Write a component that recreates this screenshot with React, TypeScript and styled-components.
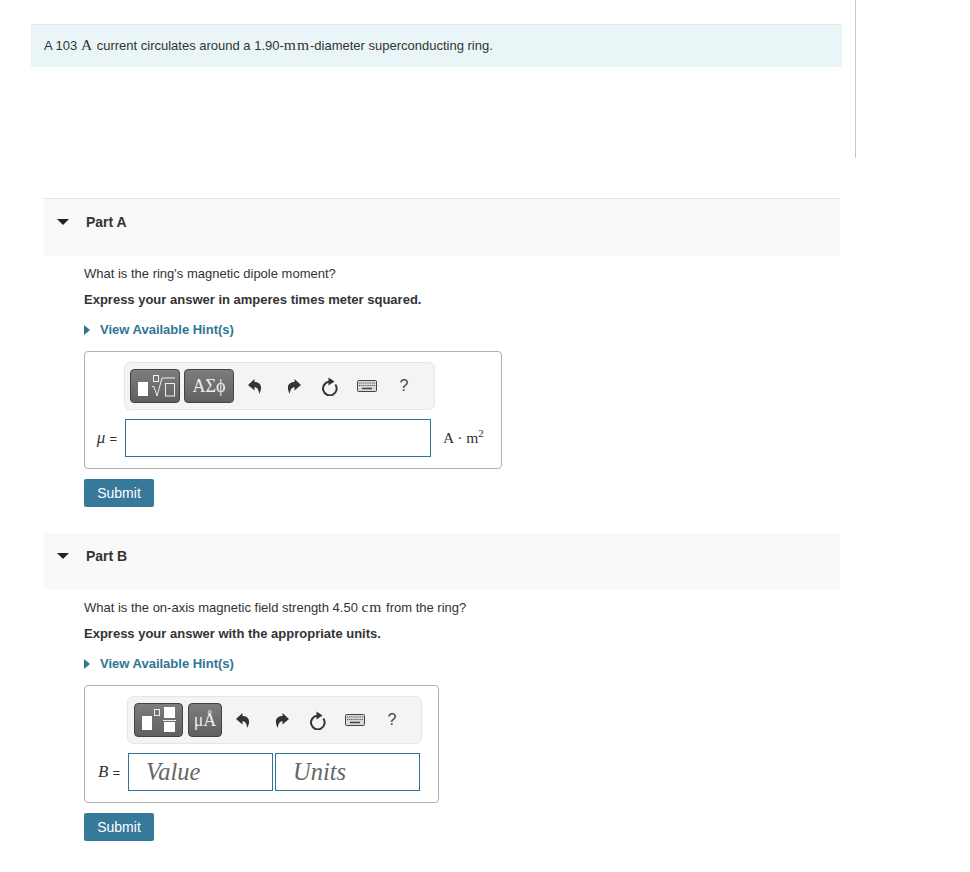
import React from "react";
import styled, { createGlobalStyle } from "styled-components";

const GlobalStyle = createGlobalStyle`
  body {
    margin: 0;
    background: #fff;
    color: #333;
    font-family: "Liberation Sans", Arial, sans-serif;
    font-size: 13px;
  }
`;

const Page = styled.div`
  width: 970px;
  height: 872px;
  overflow: hidden;
`;

const Intro = styled.div`
  box-sizing: border-box;
  width: 856px;
  height: 158px;
  padding: 24px 13px 0 31px;
  border-right: 1px solid #c9c9c9;
`;

const Banner = styled.div`
  box-sizing: border-box;
  height: 43px;
  padding: 12px 13px 0;
  line-height: 18px;
  background: #e9f5f7;
  border-top: 1px solid #e2e6e6;
`;

const Unit = styled.span`
  font-family: "Liberation Serif", serif;
  font-size: 15.5px;
  letter-spacing: 1px;
  line-height: 0;
`;

const PartList = styled.div`
  margin: 40px 0 0 44px;
  width: 796px;
  display: flex;
  flex-direction: column;
  gap: 26px;
`;

const PartHeader = styled.div<{ $first?: boolean }>`
  box-sizing: content-box;
  height: 43px;
  padding: 14px 0 0 13px;
  display: flex;
  align-items: flex-start;
  background: #f9f9f9;
  border-top: ${(props) => (props.$first ? "1px solid #e2e2e2" : "none")};
`;

const Caret = styled.span`
  width: 0;
  height: 0;
  margin: 6px 17px 0 0;
  border-style: solid;
  border-width: 6px 6px 0;
  border-color: #222 transparent transparent;
`;

const PartTitle = styled.span`
  font-size: 14px;
  font-weight: bold;
  line-height: 18px;
  color: #333;
`;

const PartBody = styled.div`
  padding: 9px 0 0 40px;
`;

const Question = styled.div`
  line-height: 18px;
`;

const Instruction = styled.div`
  margin-top: 8px;
  line-height: 18px;
  font-weight: bold;
`;

const HintLink = styled.a`
  margin-top: 12px;
  display: flex;
  align-items: center;
  line-height: 18px;
  font-weight: bold;
  color: #2f7596;

  &::before {
    content: "";
    width: 0;
    height: 0;
    margin-right: 10px;
    border-style: solid;
    border-width: 5px 0 5px 6px;
    border-color: transparent transparent transparent #2f7596;
  }
`;

const AnswerBox = styled.div<{ $width: number }>`
  box-sizing: border-box;
  width: ${(props) => props.$width}px;
  height: 118px;
  margin-top: 12px;
  padding-top: 10px;
  border: 1px solid #b0b0b0;
  border-radius: 4px;
`;

const Toolbar = styled.div<{ $offset: number; $width: number; $inset: number }>`
  box-sizing: border-box;
  width: ${(props) => props.$width}px;
  height: 48px;
  margin-left: ${(props) => props.$offset}px;
  padding: 6px 0 0 ${(props) => props.$inset}px;
  display: flex;
  align-items: flex-start;
  background: #f4f4f4;
  border: 1px solid #e6e6e6;
  border-radius: 6px;
`;

const TemplateButton = styled.div<{ $width: number; $gap: number }>`
  box-sizing: border-box;
  width: ${(props) => props.$width}px;
  height: 34px;
  margin-right: ${(props) => props.$gap}px;
  display: flex;
  align-items: center;
  justify-content: center;
  color: #eee;
  font-family: "Liberation Serif", serif;
  font-size: 18px;
  background: linear-gradient(#7d7d7d, #606060);
  border: 1px solid #444;
  border-radius: 4px;

  svg {
    display: block;
  }
`;

const ToolSlot = styled.div<{ $width: number }>`
  width: ${(props) => props.$width}px;
  height: 34px;
  display: flex;
  align-items: center;
  justify-content: center;
  color: #333;
  font-size: 16px;
`;

const HelpMark = styled.span`
  font-family: "Liberation Sans", sans-serif;
  font-size: 16px;
  color: #444;
`;

const AnswerRow = styled.div`
  margin-top: 9px;
  display: flex;
  align-items: center;
`;

const FieldLabel = styled.div<{ $width: number }>`
  box-sizing: border-box;
  width: ${(props) => props.$width}px;
  padding-right: 8px;
  text-align: right;
  color: #333;
`;

const MathVar = styled.i`
  font-family: "Liberation Serif", serif;
  font-size: 17px;
  margin-right: 4px;
`;

const FieldGroup = styled.div`
  display: flex;
  gap: 2px;
`;

const Field = styled.input<{ $width: number }>`
  box-sizing: border-box;
  width: ${(props) => props.$width}px;
  height: 38px;
  padding: 0 0 0 17px;
  background: #fff;
  border: 1px solid #2f7596;
  border-radius: 0;
  outline: none;
  font-family: "Liberation Serif", serif;
  font-size: 24.5px;
  font-style: italic;

  &::placeholder {
    color: #666;
    opacity: 1;
  }
`;

const UnitLabel = styled.div`
  margin-left: 12px;
  font-family: "Liberation Serif", serif;
  font-size: 15.5px;
  color: #333;

  sup {
    font-size: 11px;
    line-height: 0;
  }
`;

const SubmitButton = styled.button`
  display: block;
  width: 70px;
  height: 28px;
  margin-top: 10px;
  padding: 0;
  background: #37799b;
  color: #fff;
  border: none;
  border-radius: 2px;
  font-family: "Liberation Sans", Arial, sans-serif;
  font-size: 14px;
`;

const RadicalIcon = () => (
  <svg width="48" height="32" viewBox="0 0 48 32">
    <rect x="7" y="12" width="10" height="14" fill="#fff" />
    <g fill="none" stroke="#eee" strokeWidth="1">
      <rect x="22.5" y="5.5" width="5" height="6" />
      <path d="M21 16.5h2l3 9.5 5-18h13" />
      <rect x="34.5" y="13.5" width="9" height="12.5" />
    </g>
  </svg>
);

const FractionIcon = () => (
  <svg width="47" height="32" viewBox="0 0 47 32">
    <rect x="7" y="12" width="10" height="14" fill="#fff" />
    <rect x="19.5" y="5.5" width="5" height="6" fill="none" stroke="#eee" />
    <rect x="29" y="3" width="11" height="11" fill="#fff" />
    <rect x="28" y="16" width="13" height="1" fill="#eee" />
    <rect x="29" y="18" width="11" height="10" fill="#fff" />
  </svg>
);

const ReplyArrow = styled.svg<{ $flip?: boolean }>`
  display: block;
  transform: ${(props) => (props.$flip ? "scaleX(-1)" : "none")};
`;

const ArrowIcon = ({ flip }: { flip?: boolean }) => (
  <ReplyArrow $flip={flip} width="14" height="15" viewBox="0 0 14 15">
    <path
      d="M6.5 0 0 6l6.500 5.500V8.200c2.800 0 4.200 2.200 4.700 6.800 3.300-5.800 2.500-12-4.700-12z"
      fill="#333"
    />
  </ReplyArrow>
);

const ResetIcon = () => (
  <svg width="16" height="20" viewBox="0 0 16 20">
    <path
      d="M13.3 8.500A6.800 6.800 0 1 1 7 5.800"
      fill="none"
      stroke="#333"
      strokeWidth="2"
    />
    <path d="M6.500 1.500l6 4-6 4z" fill="#333" />
  </svg>
);

const KeyboardIcon = () => (
  <svg width="20" height="12" viewBox="0 0 20 12">
    <rect x="0.5" y="0.5" width="19" height="11" rx="1" fill="#d8d8d8" stroke="#444" />
    <path
      d="M2 3h16M2 5.500h16"
      stroke="#555"
      strokeWidth="1.200"
      strokeDasharray="1.200 0.900"
    />
    <path d="M5 8.500h10" stroke="#444" strokeWidth="1.500" />
  </svg>
);

const slotWidths = [40, 38, 34, 40, 34];

interface PartConfig {
  title: string;
  first?: boolean;
  question: React.ReactNode;
  instruction: string;
  boxWidth: number;
  toolbarWidth: number;
  toolbarInset: number;
  labelWidth: number;
  label: React.ReactNode;
}

const parts: PartConfig[] = [
  {
    title: "Part A",
    first: true,
    question: "What is the ring's magnetic dipole moment?",
    instruction: "Express your answer in amperes times meter squared.",
    boxWidth: 418,
    toolbarWidth: 311,
    toolbarInset: 5,
    labelWidth: 40,
    label: "μ",
  },
  {
    title: "Part B",
    question: (
      <>
        What is the on-axis magnetic field strength 4.50 <Unit>cm</Unit> from
        the ring?
      </>
    ),
    instruction: "Express your answer with the appropriate units.",
    boxWidth: 355,
    toolbarWidth: 295,
    toolbarInset: 6,
    labelWidth: 43,
    label: "B",
  },
];

const App: React.FC = () => {
  return (
    <Page>
      <GlobalStyle />
      <Intro>
        <Banner>
          A 103 <Unit>A</Unit> current circulates around a 1.90-<Unit>mm</Unit>
          -diameter superconducting ring.
        </Banner>
      </Intro>
      <PartList>
        {parts.map((part) => (
          <section key={part.title}>
            <PartHeader $first={part.first}>
              <Caret />
              <PartTitle>{part.title}</PartTitle>
            </PartHeader>
            <PartBody>
              <Question>{part.question}</Question>
              <Instruction>{part.instruction}</Instruction>
              <HintLink>View Available Hint(s)</HintLink>
              <AnswerBox $width={part.boxWidth}>
                <Toolbar
                  $offset={part.labelWidth - 1}
                  $width={part.toolbarWidth}
                  $inset={part.toolbarInset}
                >
                  {part.first ? (
                    <>
                      <TemplateButton $width={50} $gap={4}>
                        <RadicalIcon />
                      </TemplateButton>
                      <TemplateButton $width={50} $gap={1}>
                        ΑΣϕ
                      </TemplateButton>
                    </>
                  ) : (
                    <>
                      <TemplateButton $width={49} $gap={5}>
                        <FractionIcon />
                      </TemplateButton>
                      <TemplateButton $width={34} $gap={1}>
                        μÅ
                      </TemplateButton>
                    </>
                  )}
                  <ToolSlot $width={slotWidths[0]}>
                    <ArrowIcon />
                  </ToolSlot>
                  <ToolSlot $width={slotWidths[1]}>
                    <ArrowIcon flip />
                  </ToolSlot>
                  <ToolSlot $width={slotWidths[2]}>
                    <ResetIcon />
                  </ToolSlot>
                  <ToolSlot $width={slotWidths[3]}>
                    <KeyboardIcon />
                  </ToolSlot>
                  <ToolSlot $width={slotWidths[4]}>
                    <HelpMark>?</HelpMark>
                  </ToolSlot>
                </Toolbar>
                <AnswerRow>
                  <FieldLabel $width={part.labelWidth}>
                    <MathVar>{part.label}</MathVar>=
                  </FieldLabel>
                  {part.first ? (
                    <>
                      <Field $width={306} />
                      <UnitLabel>
                        A · m<sup>2</sup>
                      </UnitLabel>
                    </>
                  ) : (
                    <FieldGroup>
                      <Field $width={145} placeholder="Value" />
                      <Field $width={145} placeholder="Units" />
                    </FieldGroup>
                  )}
                </AnswerRow>
              </AnswerBox>
              <SubmitButton>Submit</SubmitButton>
            </PartBody>
          </section>
        ))}
      </PartList>
    </Page>
  );
};

export default App;
